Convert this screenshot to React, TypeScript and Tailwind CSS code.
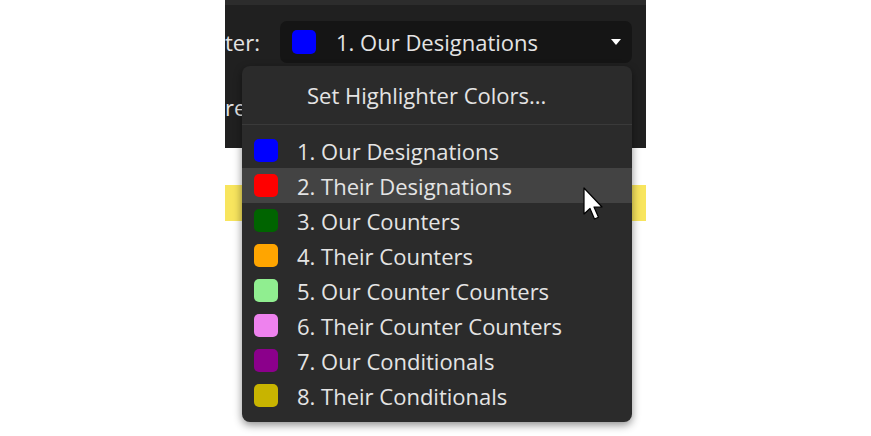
import React from "react";

const items: { label: string; color: string }[] = [
  { label: "1. Our Designations", color: "#0000ff" },
  { label: "2. Their Designations", color: "#ff0000" },
  { label: "3. Our Counters", color: "#006400" },
  { label: "4. Their Counters", color: "#ffa500" },
  { label: "5. Our Counter Counters", color: "#90ee90" },
  { label: "6. Their Counter Counters", color: "#ee82ee" },
  { label: "7. Our Conditionals", color: "#8b008b" },
  { label: "8. Their Conditionals", color: "#c8b400" },
];

export default function App() {
  return (
    <div
      className="relative w-[871px] h-[436px] overflow-hidden bg-white text-[#e4e4e4]"
      style={{ fontFamily: '"Open Sans", "Noto Sans", sans-serif' }}
    >
      <div className="ml-[225px] w-[421px]">
        <div className="h-[148px] bg-[#202020] overflow-hidden">
          <div className="h-[5px] bg-[#2c2c2c]" />
          <div className="flex items-center mt-[16px] h-[42px]">
            <div className="w-[37px] whitespace-nowrap text-[22px] leading-none">ter:</div>
            <div className="ml-[18px] w-[352px] h-[42px] rounded-[7px] bg-[#151515] flex items-center pl-[12px] pr-[10px]">
              <div className="w-[24px] h-[24px] rounded-[5px] bg-[#0000ff]" />
              <span className="ml-[20px] text-[22px] leading-none whitespace-nowrap">1. Our Designations</span>
              <div className="ml-auto mr-[1px] w-0 h-0 border-l-[5px] border-r-[5px] border-t-[6px] border-l-transparent border-r-transparent border-t-white" />
            </div>
          </div>
          <div className="mt-[33px] text-[22px] leading-none whitespace-nowrap">re</div>
        </div>
        <div className="mt-[37px] h-[36px] bg-[#f8e55e]" />
      </div>

      <div className="absolute left-[242px] top-[66px] w-[390px] h-[356px] rounded-[8px] bg-[#2b2b2b] shadow-[0_3px_8px_rgba(0,0,0,0.45)] flex flex-col">
        <div className="h-[58px] flex items-center pl-[65px] text-[22px] whitespace-nowrap">
          Set Highlighter Colors...
        </div>
        <div className="h-px bg-[#3a3a3a]" />
        <div className="pt-[8px] flex flex-col">
          {items.map((it, i) => (
            <div
              key={it.label}
              className={
                "h-[35px] flex items-center pl-[12px] " + (i === 1 ? "bg-[#434343]" : "")
              }
            >
              <div className="w-[24px] h-[23px] rounded-[5px]" style={{ backgroundColor: it.color }} />
              <span className="ml-[19px] text-[22px] leading-none whitespace-nowrap">{it.label}</span>
            </div>
          ))}
        </div>
      </div>

      <svg
        className="absolute left-[583px] top-[187px]"
        width="22"
        height="34"
        viewBox="0 0 22 34"
      >
        <path
          d="M1 1 L1 27 L7 21.5 L11.5 32 L15.5 30.3 L11 20 L19 20 Z"
          fill="white"
          stroke="black"
          strokeWidth="1.2"
          strokeLinejoin="round"
        />
      </svg>
    </div>
  );
}
